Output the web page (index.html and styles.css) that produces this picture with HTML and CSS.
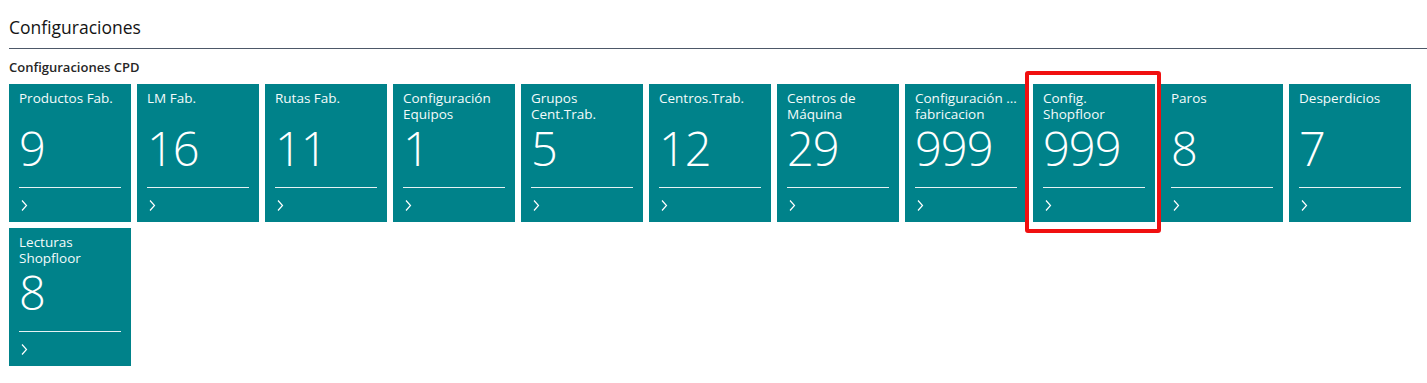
FILE: index.html
```html
<!DOCTYPE html>
<html lang="es">
<head>
<meta charset="utf-8">
<title>Configuraciones</title>
<link rel="stylesheet" href="styles.css">
</head>
<body>
<div class="page">
  <h1 class="page-title">Configuraciones</h1>
  <h2 class="group-title">Configuraciones CPD</h2>
  <div class="tiles">
    <div class="tile"><div class="tile-title">Productos Fab.</div><div class="tile-value">9</div><div class="tile-rule"></div><svg class="chev" width="7" height="11" viewBox="0 0 7 11"><polyline points="1,0.5 5.5,5.5 1,10.5" fill="none" stroke="#fff" stroke-width="1.2"/></svg></div>
    <div class="tile"><div class="tile-title">LM Fab.</div><div class="tile-value">16</div><div class="tile-rule"></div><svg class="chev" width="7" height="11" viewBox="0 0 7 11"><polyline points="1,0.5 5.5,5.5 1,10.5" fill="none" stroke="#fff" stroke-width="1.2"/></svg></div>
    <div class="tile"><div class="tile-title">Rutas Fab.</div><div class="tile-value">11</div><div class="tile-rule"></div><svg class="chev" width="7" height="11" viewBox="0 0 7 11"><polyline points="1,0.5 5.5,5.5 1,10.5" fill="none" stroke="#fff" stroke-width="1.2"/></svg></div>
    <div class="tile"><div class="tile-title">Configuración<br>Equipos</div><div class="tile-value">1</div><div class="tile-rule"></div><svg class="chev" width="7" height="11" viewBox="0 0 7 11"><polyline points="1,0.5 5.5,5.5 1,10.5" fill="none" stroke="#fff" stroke-width="1.2"/></svg></div>
    <div class="tile"><div class="tile-title">Grupos<br>Cent.Trab.</div><div class="tile-value">5</div><div class="tile-rule"></div><svg class="chev" width="7" height="11" viewBox="0 0 7 11"><polyline points="1,0.5 5.5,5.5 1,10.5" fill="none" stroke="#fff" stroke-width="1.2"/></svg></div>
    <div class="tile"><div class="tile-title">Centros.Trab.</div><div class="tile-value">12</div><div class="tile-rule"></div><svg class="chev" width="7" height="11" viewBox="0 0 7 11"><polyline points="1,0.5 5.5,5.5 1,10.5" fill="none" stroke="#fff" stroke-width="1.2"/></svg></div>
    <div class="tile"><div class="tile-title">Centros de<br>Máquina</div><div class="tile-value">29</div><div class="tile-rule"></div><svg class="chev" width="7" height="11" viewBox="0 0 7 11"><polyline points="1,0.5 5.5,5.5 1,10.5" fill="none" stroke="#fff" stroke-width="1.2"/></svg></div>
    <div class="tile"><div class="tile-title">Configuración ...<br>fabricacion</div><div class="tile-value">999</div><div class="tile-rule"></div><svg class="chev" width="7" height="11" viewBox="0 0 7 11"><polyline points="1,0.5 5.5,5.5 1,10.5" fill="none" stroke="#fff" stroke-width="1.2"/></svg></div>
    <div class="tile tile-marked"><div class="tile-title">Config.<br>Shopfloor</div><div class="tile-value">999</div><div class="tile-rule"></div><svg class="chev" width="7" height="11" viewBox="0 0 7 11"><polyline points="1,0.5 5.5,5.5 1,10.5" fill="none" stroke="#fff" stroke-width="1.2"/></svg><div class="mark"></div></div>
    <div class="tile"><div class="tile-title">Paros</div><div class="tile-value">8</div><div class="tile-rule"></div><svg class="chev" width="7" height="11" viewBox="0 0 7 11"><polyline points="1,0.5 5.5,5.5 1,10.5" fill="none" stroke="#fff" stroke-width="1.2"/></svg></div>
    <div class="tile"><div class="tile-title">Desperdicios</div><div class="tile-value">7</div><div class="tile-rule"></div><svg class="chev" width="7" height="11" viewBox="0 0 7 11"><polyline points="1,0.5 5.5,5.5 1,10.5" fill="none" stroke="#fff" stroke-width="1.2"/></svg></div>
    <div class="tile"><div class="tile-title">Lecturas<br>Shopfloor</div><div class="tile-value">8</div><div class="tile-rule"></div><svg class="chev" width="7" height="11" viewBox="0 0 7 11"><polyline points="1,0.5 5.5,5.5 1,10.5" fill="none" stroke="#fff" stroke-width="1.2"/></svg></div>
  </div>
</div>
</body>
</html>
```
FILE: styles.css
```css
html, body {
  margin: 0;
  padding: 0;
  background: #ffffff;
}

body {
  font-family: "Open Sans", "Noto Sans", "Liberation Sans", sans-serif;
  color: #212121;
}

.page {
  padding: 15px 0 0 9px;
}

.page-title {
  margin: 0;
  font-size: 17.5px;
  line-height: 24px;
  font-weight: 400;
  color: #141414;
  padding-bottom: 9px;
  border-bottom: 1px solid #4d5868;
}

.group-title {
  margin: 9px 0 0;
  font-size: 13px;
  line-height: 18px;
  font-weight: 600;
  color: #262626;
}

.tiles {
  margin-top: 8px;
  display: grid;
  grid-template-columns: repeat(11, 122px);
  grid-auto-rows: 138px;
  gap: 6px;
}

.tile {
  position: relative;
  background: #00828a;
  color: #ffffff;
  padding: 6px 10px 0;
  box-sizing: border-box;
  display: flex;
  flex-direction: column;
}

.tile-title {
  font-size: 13.5px;
  line-height: 16px;
  height: 32px;
  white-space: nowrap;
  color: #f4fbfb;
}

.tile-value {
  margin-top: 8px;
  font-size: 47px;
  line-height: 36px;
  font-weight: 300;
  letter-spacing: -1px;
}

.tile-rule {
  margin-top: 21px;
  height: 1px;
  background: #e6f2f3;
}

.chev {
  display: block;
  margin: 12px 0 0 2px;
}

.mark {
  position: absolute;
  left: -8px;
  top: -13px;
  right: -6px;
  bottom: -11px;
  border: 4px solid #f01010;
  border-radius: 3px;
  pointer-events: none;
}
```
